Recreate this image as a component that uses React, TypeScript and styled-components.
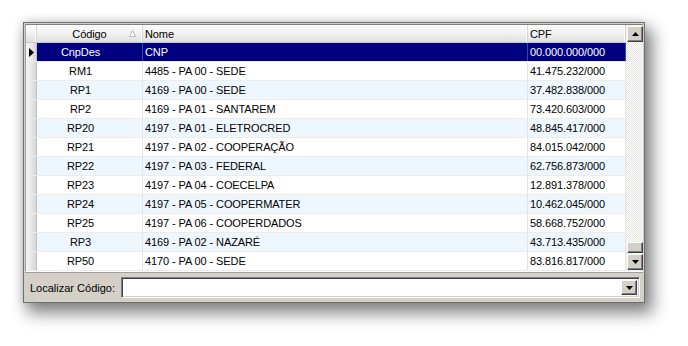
import React from 'react';
import styled, { createGlobalStyle } from 'styled-components';

const GlobalStyle = createGlobalStyle`
  html, body {
    margin: 0;
    padding: 0;
    background: #ffffff;
  }
  body {
    font-family: "Liberation Sans", Arial, sans-serif;
    font-size: 11px;
  }
`;

const Page = styled.div`
  padding: 22px 0 0 23px;
  width: 688px;
  height: 346px;
  box-sizing: border-box;
`;

const Window = styled.div`
  width: 622px;
  height: 281px;
  box-sizing: border-box;
  border: 1px solid #6f6f6f;
  background: #d4d0c8;
  padding: 1px;
  display: flex;
  flex-direction: column;
  box-shadow: 6px 9px 15px 2px rgba(0, 0, 0, 0.45),
    0 0 9px rgba(0, 0, 0, 0.16);
`;

const GridArea = styled.div`
  display: flex;
  height: 248px;
  border-top: 1px solid #808080;
  border-left: 1px solid #a0a0a0;
  border-bottom: 1px solid #ffffff;
  box-sizing: border-box;
  background: #ffffff;
`;

const Table = styled.div`
  flex: 1;
  display: flex;
  flex-direction: column;
  letter-spacing: -0.1px;
  color: #000;
`;

const COLS = '11px 106px 385px 1fr';

const HeaderRow = styled.div`
  display: grid;
  grid-template-columns: ${COLS};
  height: 18px;
  background: linear-gradient(to bottom, #fbfbfb 0%, #f0f0f0 55%, #dedede 100%);
  border-bottom: 1px solid #c8c8c8;
  box-sizing: border-box;
`;

const HeaderCell = styled.div<{ $center?: boolean }>`
  position: relative;
  line-height: 18px;
  padding: 0 2px;
  text-align: ${({ $center }) => ($center ? 'center' : 'left')};
  border-right: 1px solid #d4d4d4;
  box-shadow: inset -1px 0 0 #fafafa;
  white-space: nowrap;
  overflow: hidden;
`;

const SortArrow = styled.svg`
  position: absolute;
  right: 6px;
  top: 5px;
`;

const Row = styled.div<{ $alt?: boolean; $selected?: boolean }>`
  display: grid;
  grid-template-columns: ${COLS};
  height: 19px;
  box-sizing: border-box;
  border-bottom: 1px solid #ececec;
  background: ${({ $selected, $alt }) =>
    $selected ? '#000080' : $alt ? '#eef6fe' : '#ffffff'};
  color: ${({ $selected }) => ($selected ? '#ffffff' : '#000000')};
`;

const Indicator = styled.div`
  background: linear-gradient(to right, #f6f6f6 0%, #e4e4e4 60%, #d6d6d6 100%);
  border-right: 1px solid #c0c0c0;
  display: flex;
  align-items: center;
  justify-content: center;
`;

const Cell = styled.div<{ $center?: boolean; $selected?: boolean }>`
  line-height: 19px;
  padding: ${({ $center }) => ($center ? '0 18px 0 0' : '0 2px')};
  text-align: ${({ $center }) => ($center ? 'center' : 'left')};
  border-right: 1px solid
    ${({ $selected }) => ($selected ? '#2a4aa8' : '#e4e4e4')};
  white-space: nowrap;
  overflow: hidden;
`;

const ScrollBar = styled.div`
  width: 17px;
  display: flex;
  flex-direction: column;
  padding: 1px 0 1px 1px;
  box-sizing: border-box;
  background-color: #f4f3ee;
  background-image: repeating-conic-gradient(#e6e4de 0% 25%, #ffffff 0% 50%);
  background-size: 2px 2px;
`;

const ScrollButton = styled.div<{ $h?: number }>`
  height: ${({ $h }) => $h ?? 16}px;
  box-sizing: border-box;
  background: #d4d0c8;
  border-top: 1px solid #ffffff;
  border-left: 1px solid #ffffff;
  border-right: 1px solid #404040;
  border-bottom: 1px solid #404040;
  box-shadow: inset -1px -1px 0 #808080;
  display: flex;
  align-items: center;
  justify-content: center;
`;

const Track = styled.div`
  flex: 1;
  display: flex;
  flex-direction: column;
  justify-content: flex-end;
`;

const Thumb = styled(ScrollButton)`
  margin-bottom: 1px;
`;

const BottomBar = styled.div`
  flex: 1;
  display: flex;
  align-items: center;
  gap: 6px;
  padding: 0 3px 0 5px;
  border-top: 1px solid #a0a0a0;
`;

const Label = styled.span`
  font-size: 11px;
  color: #000;
  white-space: nowrap;
  margin-top: 2px;
`;

const Combo = styled.div`
  flex: 1;
  height: 21px;
  box-sizing: border-box;
  margin-top: 1px;
  background: #ffffff;
  border-top: 1px solid #808080;
  border-left: 1px solid #808080;
  border-right: 1px solid #ffffff;
  border-bottom: 1px solid #ffffff;
  box-shadow: inset 1px 1px 0 #404040, inset -1px -1px 0 #d4d0c8;
  display: flex;
  justify-content: flex-end;
  padding: 2px;
`;

const ComboButton = styled(ScrollButton)`
  width: 16px;
  height: 15px;
`;

function Arrow({ up }: { up?: boolean }) {
  return (
    <svg width="7" height="4" viewBox="0 0 7 4">
      <path d={up ? 'M3.5 0 L7 4 L0 4 Z' : 'M0 0 L7 0 L3.5 4 Z'} fill="#000" />
    </svg>
  );
}

const rows = [
  ['CnpDes', 'CNP', '00.000.000/000'],
  ['RM1', '4485 - PA 00 - SEDE', '41.475.232/000'],
  ['RP1', '4169 - PA 00 - SEDE', '37.482.838/000'],
  ['RP2', '4169 - PA 01 - SANTAREM', '73.420.603/000'],
  ['RP20', '4197 - PA 01 - ELETROCRED', '48.845.417/000'],
  ['RP21', '4197 - PA 02 - COOPERAÇÃO', '84.015.042/000'],
  ['RP22', '4197 - PA 03 - FEDERAL', '62.756.873/000'],
  ['RP23', '4197 - PA 04 - COECELPA', '12.891.378/000'],
  ['RP24', '4197 - PA 05 - COOPERMATER', '10.462.045/000'],
  ['RP25', '4197 - PA 06 - COOPERDADOS', '58.668.752/000'],
  ['RP3', '4169 - PA 02 - NAZARÉ', '43.713.435/000'],
  ['RP50', '4170 - PA 00 - SEDE', '83.816.817/000'],
];

export default function App() {
  return (
    <>
      <GlobalStyle />
      <Page>
        <Window>
          <GridArea>
            <Table>
              <HeaderRow>
                <HeaderCell />
                <HeaderCell $center>
                  Código
                  <SortArrow width="7" height="7" viewBox="0 0 7 7">
                    <path d="M3.5 0.5 L6.5 6.5 L0.5 6.5 Z" fill="#fafafa" stroke="#b8b8b8" />
                  </SortArrow>
                </HeaderCell>
                <HeaderCell>Nome</HeaderCell>
                <HeaderCell>CPF</HeaderCell>
              </HeaderRow>
              {rows.map(([code, name, cpf], i) => {
                const selected = i === 0;
                return (
                  <Row key={code} $selected={selected} $alt={i % 2 === 0}>
                    <Indicator>
                      {selected && (
                        <svg width="5" height="9" viewBox="0 0 5 9">
                          <path d="M0 0 L5 4.5 L0 9 Z" fill="#000" />
                        </svg>
                      )}
                    </Indicator>
                    <Cell $center $selected={selected}>{code}</Cell>
                    <Cell $selected={selected}>{name}</Cell>
                    <Cell $selected={selected}>{cpf}</Cell>
                  </Row>
                );
              })}
            </Table>
            <ScrollBar>
              <ScrollButton>
                <Arrow up />
              </ScrollButton>
              <Track>
                <Thumb $h={11} />
              </Track>
              <ScrollButton>
                <Arrow />
              </ScrollButton>
            </ScrollBar>
          </GridArea>
          <BottomBar>
            <Label>Localizar Código:</Label>
            <Combo>
              <ComboButton>
                <Arrow />
              </ComboButton>
            </Combo>
          </BottomBar>
        </Window>
      </Page>
    </>
  );
}
